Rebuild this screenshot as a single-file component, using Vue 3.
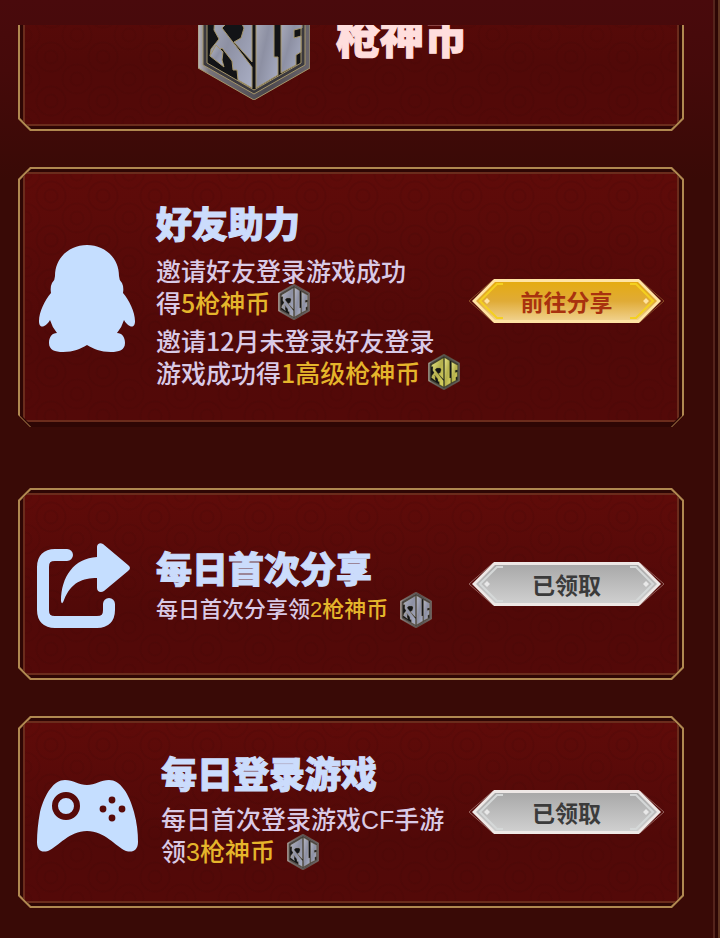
<script setup>
const tasks = [
  {
    id: 'invite',
    title: '好友助力',
    icon: 'penguin',
    action: '前往分享',
    done: false,
    groups: [
      [
        { text: '邀请好友登录游戏成功' },
        { text: '得', reward: '5枪神币', coin: 'silver' },
      ],
      [
        { text: '邀请12月未登录好友登录' },
        { text: '游戏成功得', reward: '1高级枪神币', coin: 'gold' },
      ],
    ],
  },
  {
    id: 'share',
    title: '每日首次分享',
    icon: 'share',
    action: '已领取',
    done: true,
    groups: [[{ text: '每日首次分享领', reward: '2枪神币', coin: 'silver' }]],
  },
  {
    id: 'login',
    title: '每日登录游戏',
    icon: 'gamepad',
    action: '已领取',
    done: true,
    groups: [
      [
        { text: '每日首次登录游戏CF手游' },
        { text: '领', reward: '3枪神币', coin: 'silver' },
      ],
    ],
  },
]
</script>

<template>
  <main class="page">
    <svg class="defs" aria-hidden="true">
      <defs>
        <linearGradient id="plate-silver" x1="0" y1="0" x2="1" y2="1">
          <stop offset="0" stop-color="#b4b6c4" />
          <stop offset="0.5" stop-color="#8d90a3" />
          <stop offset="1" stop-color="#a9aec4" />
        </linearGradient>
        <linearGradient id="plate-gold" x1="0" y1="0" x2="1" y2="1">
          <stop offset="0" stop-color="#e8e58a" />
          <stop offset="0.5" stop-color="#b5b04c" />
          <stop offset="1" stop-color="#dcd662" />
        </linearGradient>
        <linearGradient id="coin-rim" x1="0" y1="0" x2="1" y2="0">
          <stop offset="0" stop-color="#b9b5ba" />
          <stop offset="0.1" stop-color="#77737a" />
          <stop offset="0.6" stop-color="#4b474d" />
          <stop offset="1" stop-color="#69646c" />
        </linearGradient>
        <linearGradient id="btn-gold" x1="0" y1="0" x2="0" y2="1">
          <stop offset="0" stop-color="#e5ab12" />
          <stop offset="0.5" stop-color="#e0ab36" />
          <stop offset="1" stop-color="#f0d08a" />
        </linearGradient>
        <linearGradient id="btn-grey" x1="0" y1="0" x2="0" y2="1">
          <stop offset="0" stop-color="#a9a9a9" />
          <stop offset="1" stop-color="#cfcfcf" />
        </linearGradient>
        <symbol id="coin" viewBox="0 0 112 128">
          <path d="M56 0 112 32V96L56 128 0 96V32Z" fill="url(#coin-rim)" />
          <path d="M56 6 107 35V93L56 122 5 93V35Z" fill="#3b393e" />
          <path d="M56 11 103 38V91L56 118 9 91V38Z" fill="#121316" />
          <g stroke-width="1">
            <path d="M54 14V90L36 70 43 66 46 56 43 50H30L24 56 54 95V116L40 108 39 98 35 98 34 89 24 76 12 84 13 77 21 67 16 58 17 44 12 46V39Z" />
            <path d="M12 84 18 73 25 80 24 88 26 95Z" />
            <path d="M58 13 76 24V85H80V103L58 116Z" />
            <path d="M83 28 104 40V56L96 58V66L103 64V80L98 83V93L83 101Z" />
          </g>
        </symbol>
      </defs>
    </svg>

    <section class="banner">
      <div class="card card-banner">
        <svg class="coin coin-large silver" aria-hidden="true"><use href="#coin" /></svg>
        <strong class="banner-name">枪神币</strong>
      </div>
    </section>

    <div class="tasks">
      <article v-for="task in tasks" :key="task.id" class="card task" :class="task.id">
        <div class="icon-cell">
          <svg v-if="task.icon === 'penguin'" class="icon" width="98" height="108" viewBox="0 0 98 108" aria-hidden="true">
            <path d="M49 0C67 0 81 13 81 31Q81 35 84 38Q86 42 85 48C91 55 97 67 97 76C97 85 90 82 86 75Q84 82 79 88C84 88 87 92 87 98C87 105 81 107 73 107C62 107 56 104 49 100C42 104 36 107 25 107C17 107 11 105 11 98C11 92 14 88 19 88Q14 82 12 75C8 82 1 85 1 76C1 67 7 55 13 48Q12 42 14 38Q17 35 17 31C17 13 31 0 49 0Z" />
          </svg>
          <svg v-else-if="task.icon === 'share'" class="icon" width="96" height="87" viewBox="0 0 96 87" aria-hidden="true">
            <path class="icon-line" d="M31 12H19Q7 12 7 24V67Q7 79 19 79H61Q73 79 73 67V61" />
            <path d="M61 4C61 1 64 -1 67 1L92 22Q96 25 92 28L68 48C65 50 61 49 61 45V35C47 35 35 39 28 57Q26 63 25 58C25 34 38 15 61 14Z" />
          </svg>
          <svg v-else class="icon" width="103" height="74" viewBox="0 0 103 74" aria-hidden="true">
            <path d="M29 1C37 1 43 6 51 6C59 6 65 1 73 1C84 1 93 14 98 33C101 44 102 54 102 63C102 71 97 74 90 72C79 67 69 52 51 52C33 52 23 67 12 72C5 74 1 71 1 63C1 54 2 44 4 33C9 14 18 1 29 1Z" />
            <g class="icon-hole">
              <circle class="ring" cx="30" cy="27" r="11" />
              <circle cx="76" cy="21" r="3.4" />
              <circle cx="67" cy="30" r="3.4" />
              <circle cx="86" cy="30" r="3.4" />
              <circle cx="76" cy="39" r="3.4" />
            </g>
          </svg>
        </div>

        <div class="copy">
          <h2 class="title">{{ task.title }}</h2>
          <div class="groups">
            <p v-for="(group, g) in task.groups" :key="g" class="group">
              <span v-for="(line, l) in group" :key="l" class="line">
                <span>{{ line.text }}<em v-if="line.reward" class="reward">{{ line.reward }}</em></span>
                <svg v-if="line.coin" class="coin coin-small" :class="line.coin" aria-hidden="true"><use href="#coin" /></svg>
              </span>
            </p>
          </div>
        </div>

        <button class="action" :class="{ done: task.done }" type="button">
          <svg class="action-shape" viewBox="0 0 197 44" aria-hidden="true">
            <path class="shadow-line" d="M25 1 1 22 25 43M172 1 196 22 172 43" />
            <path class="edge" d="M26 0H171L193 22 171 44H26L4 22Z" />
            <path class="face" d="M27 3H170L189 22 170 41H27L8 22Z" />
            <path class="inner-line" d="M35 5H29L12 22 29 39H35M162 5H168L185 22 168 39H162" />
            <path class="stud" d="M19 19 22 22 19 25 16 22ZM178 19 181 22 178 25 175 22Z" />
          </svg>
          <span class="action-label">{{ task.action }}</span>
        </button>
      </article>
    </div>
  </main>
</template>

<style>
body {
  margin: 0;
  background: #390a06;
}
</style>

<style scoped>
.page {
  position: relative;
  box-sizing: border-box;
  min-height: 100vh;
  padding: 25px 36px 30px 18px;
  background: linear-gradient(#490a0c 0, #450a0a 70px, #390a06 180px);
  font-family: "Noto Sans CJK SC", sans-serif;
}

.page::after {
  content: "";
  position: absolute;
  inset: 0 0 0 auto;
  width: 7px;
  background: linear-gradient(90deg, #55241b 0 2px, #2c0604 2px 5px, #5e3420 5px);
}

.defs {
  position: absolute;
  width: 0;
  height: 0;
}

.card {
  position: relative;
  isolation: isolate;
  box-sizing: border-box;
  --cut: 12px;
  clip-path: polygon(var(--cut) 0, calc(100% - var(--cut)) 0, 100% var(--cut), 100% calc(100% - var(--cut)), calc(100% - var(--cut)) 100%, var(--cut) 100%, 0 calc(100% - var(--cut)), 0 var(--cut));
  background: #b08850;
}

.card::before,
.card::after {
  content: "";
  position: absolute;
  z-index: -1;
  --c: 11px;
  clip-path: polygon(var(--c) 0, calc(100% - var(--c)) 0, 100% var(--c), 100% calc(100% - var(--c)), calc(100% - var(--c)) 100%, var(--c) 100%, 0 calc(100% - var(--c)), 0 var(--c));
}

.card::before {
  inset: 2px;
  background: #2e0604;
}

.card::after {
  --c: 5px;
  inset: 5px;
  border: 2px solid #6b2c1c;
  background:
    radial-gradient(circle, transparent 0 5px, #3a050524 6px 7px, transparent 8px 13px, #3a050524 14px 15px, transparent 16px) 0 0 / 52px 44px,
    radial-gradient(circle, transparent 0 5px, #3a05051f 6px 7px, transparent 8px 13px, #3a05051f 14px 15px, transparent 16px) 26px 22px / 52px 44px,
    linear-gradient(#5f0b09, #510908 65%, #530908);
}

.banner {
  display: flex;
  align-items: flex-end;
  height: 106px;
  overflow: hidden;
}

.card-banner {
  display: flex;
  flex: 1;
  align-items: center;
  gap: 26px;
  padding: 32px 24px 31px 180px;
}

.banner-name {
  padding-bottom: 2px;
  color: #ffdedd;
  font-size: 44px;
  font-weight: 900;
  line-height: 56px;
  -webkit-text-stroke: 1px #ffdedd;
}

.tasks {
  display: grid;
  grid-template-columns: minmax(0, 1fr);
  gap: 36px;
  padding-top: 36px;
}

.task {
  display: grid;
  grid-template-columns: 102px minmax(0, 1fr) 197px;
  align-items: center;
  min-height: 192px;
  padding: 0 19px 0 18px;
}

.invite {
  min-height: 260px;
  margin-bottom: 25px;
}

.invite::before {
  bottom: 0;
}

.icon-cell {
  display: grid;
  justify-items: center;
  padding-top: 4px;
}

.share .icon-cell {
  justify-items: start;
}

.login .icon-cell {
  padding-top: 8px;
}

.icon {
  overflow: visible;
  fill: #c5deff;
}

.icon-line {
  fill: none;
  stroke: #c5deff;
  stroke-width: 12;
  stroke-linecap: round;
}

.icon-hole {
  fill: #570a09;
}

.ring {
  fill: none;
  stroke: #570a09;
  stroke-width: 6;
}

.copy {
  display: grid;
  gap: 10px;
  padding: 0 0 6px 18px;
  white-space: nowrap;
}

.share .copy {
  gap: 5px;
  padding: 3px 0 0 18px;
}

.login .copy {
  padding-left: 23px;
}

.title {
  margin: 0;
  color: #cbdcfc;
  font-size: 36px;
  font-weight: 900;
  line-height: 44px;
  -webkit-text-stroke: 1px #cbdcfc;
}

.groups {
  display: grid;
  gap: 6px;
}

.group {
  margin: 0;
  color: #d9cae6;
  font-size: 25px;
  font-weight: 500;
  line-height: 32px;
}

.share .group {
  font-family: "Liberation Sans", "Noto Sans CJK SC", sans-serif;
  font-size: 22px;
}

.login .group {
  font-family: "Liberation Sans", "Noto Sans CJK SC", sans-serif;
}

.line {
  display: flex;
  align-items: center;
  gap: 12px;
  height: 32px;
}

.invite .line {
  gap: 8px;
}

.reward {
  color: #e5b52b;
  font-style: normal;
}

.coin {
  flex: none;
}

.coin-large {
  width: 112px;
  height: 128px;
}

.coin-small {
  width: 32px;
  height: 36px;
}

.silver {
  fill: url(#plate-silver);
  stroke: #a5956a;
}

.gold {
  fill: url(#plate-gold);
  stroke: #6f7430;
}

.action {
  position: relative;
  width: 197px;
  height: 44px;
  padding: 0;
  border: 0;
  background: none;
  color: #a8320f;
  font: 700 23px/42px "Noto Sans CJK SC", sans-serif;
  cursor: pointer;
}

.invite .action {
  margin-top: 8px;
}

.action.done {
  color: #3b3b3b;
}

.action-shape {
  position: absolute;
  inset: 0;
  width: 100%;
  height: 100%;
}

.action-label {
  position: relative;
}

.shadow-line {
  fill: none;
  stroke: #8a4a26;
}

.edge {
  fill: #ffe3a2;
}

.face {
  fill: url(#btn-gold);
}

.inner-line {
  fill: none;
  stroke: #f4d020;
  stroke-width: 2;
}

.stud {
  fill: #ffe2a0;
}

.done .shadow-line {
  stroke: #94605c;
}

.done .edge {
  fill: #eee8e6;
}

.done .face {
  fill: url(#btn-grey);
}

.done .inner-line {
  stroke: #d5d8d8;
}

.done .stud {
  fill: #e8e8e8;
}
</style>
